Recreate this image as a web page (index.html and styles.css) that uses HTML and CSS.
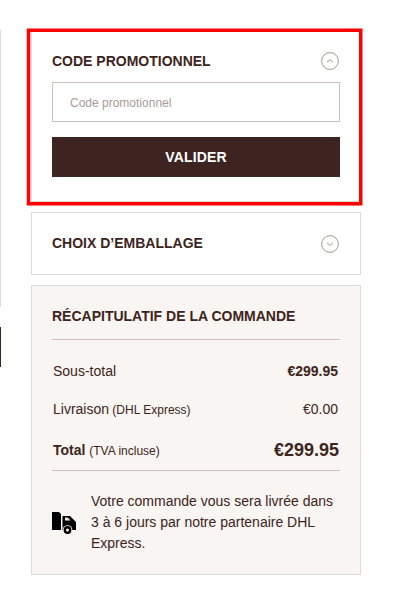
FILE: index.html
```html
<!DOCTYPE html>
<html lang="fr">
<head>
<meta charset="utf-8">
<title>Commande</title>
<link rel="stylesheet" href="styles.css">
</head>
<body>
<div class="page">
  <aside class="rail">
    <div class="rail-line"></div>
    <div class="rail-mark"></div>
  </aside>
  <main class="column">
    <section class="card promo">
      <div class="card-head">
        <h2>CODE PROMOTIONNEL</h2>
        <svg class="chev" viewBox="0 0 18 18"><circle cx="9" cy="9" r="8.4"/><path d="M6 10.2 9 7.6l3 2.6"/></svg>
      </div>
      <input class="field" type="text" placeholder="Code promotionnel">
      <button class="submit" type="button">VALIDER</button>
      <svg class="highlight" viewBox="0 0 338 179"><rect x="2.5" y="2.25" width="332.25" height="173.5"/></svg>
    </section>
    <section class="card wrap">
      <div class="card-head">
        <h2>CHOIX D’EMBALLAGE</h2>
        <svg class="chev" viewBox="0 0 18 18"><circle cx="9" cy="9" r="8.4"/><path d="M6 7.8 9 10.4l3-2.6"/></svg>
      </div>
    </section>
    <section class="card summary">
      <h2 class="sum-title">RÉCAPITULATIF DE LA COMMANDE</h2>
      <div class="row first"><span>Sous-total</span><b>€299.95</b></div>
      <div class="row"><span>Livraison<small> (DHL Express)</small></span><span>€0.00</span></div>
      <div class="row total"><span><b>Total</b> <small>(TVA incluse)</small></span><b class="grand">€299.95</b></div>
      <div class="ship">
        <svg class="truck" viewBox="0 0 24 22">
          <path class="ink" d="M0 0h7l2 2v16H0z"/>
          <path class="ink" fill-rule="evenodd" d="M10.500 4H18l6 6v8H10.500zM13 5.500V8.500h5.500L15.500 5.500z"/>
          <circle class="gap" cx="15.500" cy="18" r="4.800"/>
          <circle class="ink" cx="15.500" cy="18" r="3.900"/>
          <circle class="gap" cx="15.500" cy="18" r="1.500"/>
        </svg>
        <p>Votre commande vous sera livrée dans 3 à 6 jours par notre partenaire DHL Express.</p>
      </div>
    </section>
  </main>
</div>
</body>
</html>
```
FILE: styles.css
```css
* { box-sizing: border-box; }
html, body { margin: 0; padding: 0; background: #fff; }
body { font-family: "Liberation Sans", Arial, sans-serif; color: #3d2420; overflow: hidden; height: 602px; }
.page { display: flex; align-items: flex-start; }
.rail { width: 1px; flex: none; padding-top: 30px; }
.rail-line { height: 277px; background: #dcdcdc; }
.rail-mark { height: 40px; margin-top: 20px; background: #3d2420; }
.column { width: 330px; margin-left: 30px; padding-top: 31px; display: flex; flex-direction: column; }
.card { border: 1px solid #dedad8; background: #fff; padding: 0 20px; }
h2 { margin: 0; font-size: 14px; line-height: 20px; font-weight: 700; color: #3d2420; }
.card-head { display: flex; justify-content: space-between; align-items: center; }
.chev { width: 18px; height: 18px; fill: none; stroke: #8f7f7b; stroke-width: .8; margin-right: 1px; }
.promo { position: relative; height: 171px; padding-top: 19px; }
.highlight { position: absolute; left: -6px; top: -4px; width: 338px; height: 179px; pointer-events: none; }
.highlight rect { fill: none; stroke: #f00; stroke-width: 3.5; }
.field { display: block; width: 288px; height: 40px; margin-top: 11px; border: 1px solid #cdc1be; background: #fff; padding: 1px 17px 0; font: 12px "Liberation Sans", Arial, sans-serif; color: #3d2420; outline: none; }
.field::placeholder { color: #a89b98; opacity: 1; }
.submit { display: block; width: 288px; height: 40px; margin-top: 15px; border: 0; background: #3d2420; color: #fff; font: 700 14px "Liberation Sans", Arial, sans-serif; letter-spacing: .15px; }
.wrap { height: 63px; margin-top: 10px; padding-top: 20px; }
.wrap .chev { margin: 2px 1px 0 0; }
.summary { height: 290px; margin-top: 10px; background: #f9f5f2; padding-top: 20px; }
.sum-title { padding-bottom: 13px; border-bottom: 1px solid #cdc1be; }
.row { display: flex; justify-content: space-between; align-items: center; height: 20px; margin-top: 18px; padding: 0 2px 0 1px; font-size: 14px; line-height: 20px; }
.row.first { margin-top: 21px; }
small { font-size: 12px; }
.row.total { height: 32px; margin-top: 20px; padding: 0 1px 9px; border-bottom: 1px solid #cdc1be; }
.grand { font-size: 18px; }
.ship { display: flex; align-items: center; margin-top: 20px; gap: 15px; }
.truck { width: 24px; height: 22px; flex: none; }
.truck .ink { fill: #000; }
.truck .gap { fill: #f9f5f2; }
.ship p { margin: 0; font-size: 14px; line-height: 21px; }
```
